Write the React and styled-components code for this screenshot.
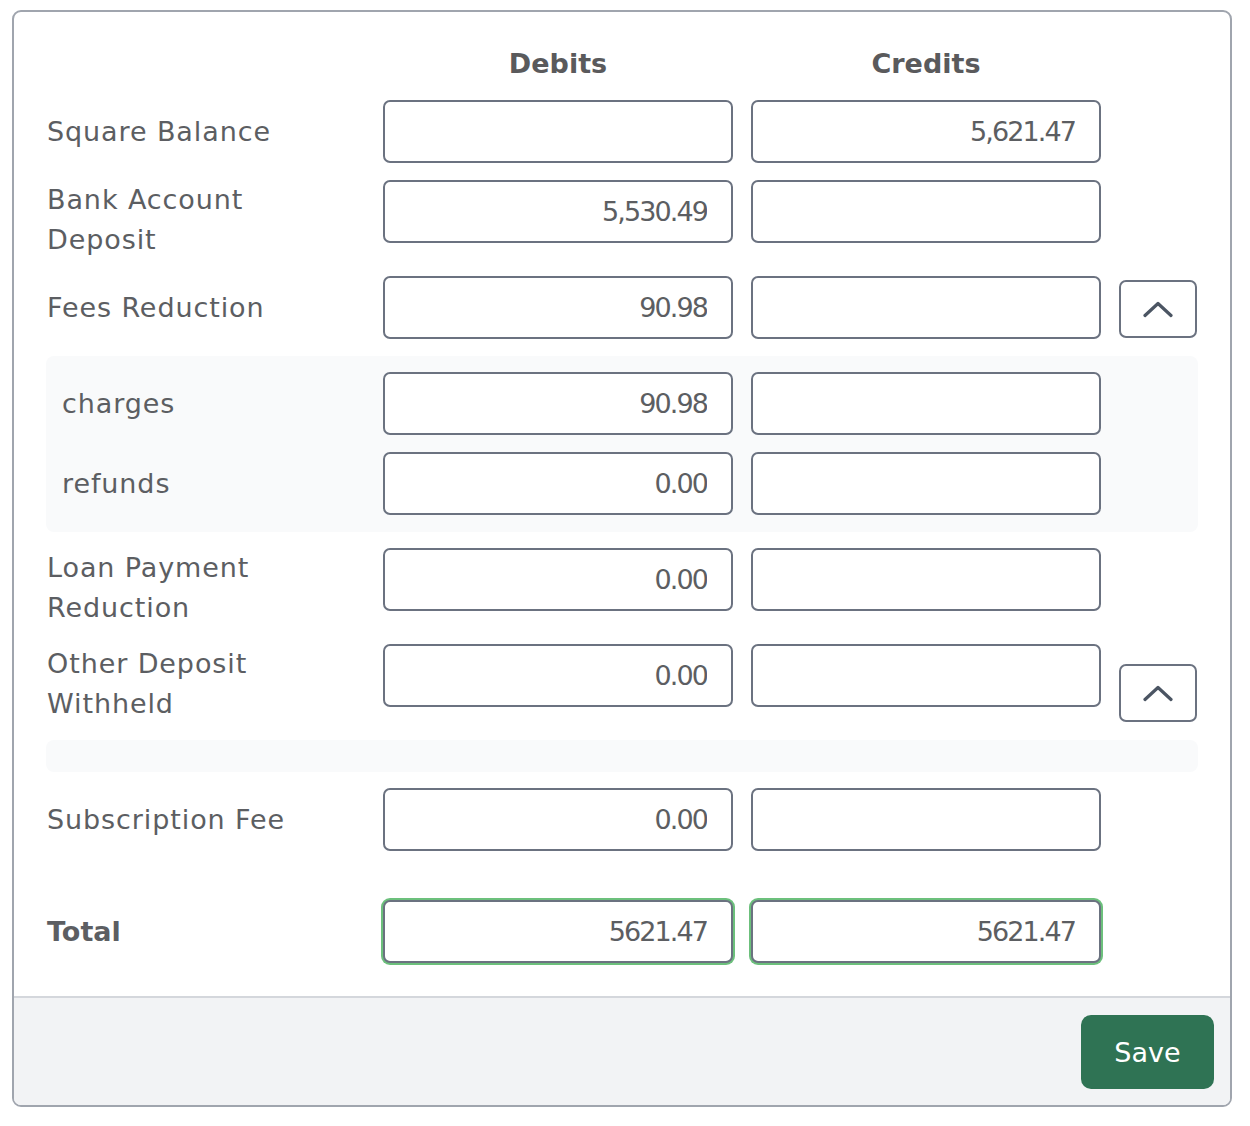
import React from "react";
import styled, { createGlobalStyle, css } from "styled-components";

const GlobalStyle = createGlobalStyle`
  body {
    margin: 0;
    background: #ffffff;
    font-family: "DejaVu Sans", "Open Sans", sans-serif;
    color: #5a5c60;
  }
`;

const Page = styled.div`
  padding: 10px 0 0 12px;
`;

const Card = styled.div`
  width: 1220px;
  box-sizing: border-box;
  border: 2px solid #a0a5ae;
  border-radius: 9px;
  overflow: hidden;
  background: #fff;
`;

const Body = styled.div`
  padding: 32px;
  display: flex;
  flex-direction: column;
  gap: 16px;
`;

const Row = styled.div`
  display: grid;
  grid-template-columns: 319px 350px 350px 1fr;
  column-gap: 18px;
  min-height: 64px;
  ${props =>
    props.spaced &&
    css`
      margin-top: 32px;
    `}
`;

const HeaderRow = styled(Row)`
  min-height: 0;
`;

const ColHead = styled.div`
  font-size: 27px;
  line-height: 40px;
  font-weight: bold;
  text-align: center;
  color: #5a5a5c;
`;

const Label = styled.div`
  align-self: center;
  font-size: 27px;
  line-height: 40px;
  padding-left: ${props => (props.inset ? "16px" : "1px")};
  font-weight: ${props => (props.bold ? "bold" : "normal")};
  letter-spacing: ${props => (props.bold ? "0" : "0.9px")};
  color: #5c5e62;
`;

const Amount = styled.input`
  align-self: start;
  box-sizing: border-box;
  width: 350px;
  height: 63px;
  margin: 0;
  border: 2px solid #6b7280;
  border-radius: 7px;
  padding: 0 24px;
  text-align: right;
  font-family: "DejaVu Sans", "Open Sans", sans-serif;
  font-size: 27px;
  letter-spacing: -1.9px;
  color: #5c5e62;
  background: #fff;
  outline: none;
  ${props =>
    props.ok &&
    css`
      box-shadow: 0 0 0 2px #6cc07c;
    `}
`;

const Toggle = styled.button`
  align-self: end;
  margin-bottom: 2px;
  box-sizing: border-box;
  width: 78px;
  height: 58px;
  border: 2px solid #6b7280;
  border-radius: 7px;
  background: #fff;
  display: flex;
  align-items: center;
  justify-content: center;
  padding: 0;
`;

const Group = styled.div`
  background: #f9fafb;
  border-radius: 8px;
  padding: 16px 0;
  display: flex;
  flex-direction: column;
  gap: 16px;
`;

const Footer = styled.div`
  border-top: 2px solid #d4d7dc;
  background: #f2f3f5;
  padding: 17px 16px 16px;
  display: flex;
  justify-content: flex-end;
`;

const SaveButton = styled.button`
  width: 133px;
  height: 74px;
  border: none;
  border-radius: 10px;
  background: #2f7354;
  color: #fff;
  font-family: "DejaVu Sans", "Open Sans", sans-serif;
  font-size: 27px;
  font-weight: 500;
`;

const Chevron = () => (
  <svg width="30" height="18" viewBox="0 0 30 18">
    <polyline
      points="2,15.5 15,3.5 28,15.5"
      fill="none"
      stroke="#4b5563"
      strokeWidth="3.2"
      strokeLinecap="round"
      strokeLinejoin="round"
    />
  </svg>
);

const Line = ({ label, debit = "", credit = "", inset, toggle, bold, ok, spaced }) => (
  <Row spaced={spaced}>
    <Label inset={inset} bold={bold}>
      {label}
    </Label>
    <Amount defaultValue={debit} ok={ok} />
    <Amount defaultValue={credit} ok={ok} />
    {toggle ? (
      <Toggle>
        <Chevron />
      </Toggle>
    ) : (
      <div />
    )}
  </Row>
);

export default function App() {
  return (
    <Page>
      <GlobalStyle />
      <Card>
        <Body>
          <HeaderRow>
            <div />
            <ColHead>Debits</ColHead>
            <ColHead>Credits</ColHead>
            <div />
          </HeaderRow>
          <Line label="Square Balance" credit="5,621.47" />
          <Line label={<>Bank Account<br />Deposit</>} debit="5,530.49" />
          <Line label="Fees Reduction" debit="90.98" toggle />
          <Group>
            <Line label="charges" debit="90.98" inset />
            <Line label="refunds" debit="0.00" inset />
          </Group>
          <Line label={<>Loan Payment<br />Reduction</>} debit="0.00" />
          <Line label={<>Other Deposit<br />Withheld</>} debit="0.00" toggle />
          <Group />
          <Line label="Subscription Fee" debit="0.00" />
          <Line label="Total" debit="5621.47" credit="5621.47" bold ok spaced />
        </Body>
        <Footer>
          <SaveButton>Save</SaveButton>
        </Footer>
      </Card>
    </Page>
  );
}
